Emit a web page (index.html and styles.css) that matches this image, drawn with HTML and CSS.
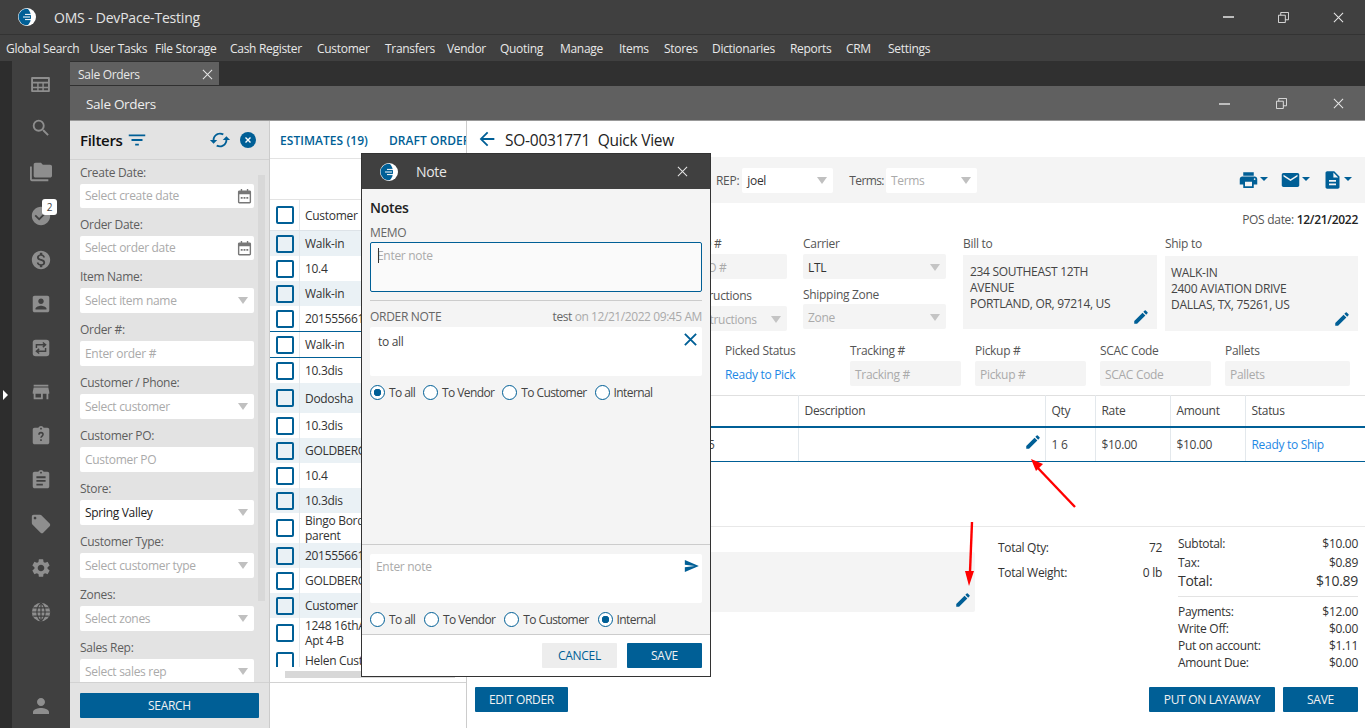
FILE: index.html
```html
<!DOCTYPE html>
<html lang="en">
<head>
<meta charset="utf-8">
<title>OMS - DevPace-Testing</title>
<link rel="stylesheet" href="styles.css">
</head>
<body>
<svg class="sprite" width="0" height="0">
  <defs>
    <symbol id="logo" viewBox="0 0 18 18"><circle cx="9" cy="9" r="9" fill="#fff"/><path d="M10 .9A8.2 8.2 0 1 0 10 17.1C12 15 13 12 13 9S12 3 10 .9z" fill="#005f96"/><path d="M7 6.400h7M5 9h7M7 11.600h7" stroke="#fff" stroke-width="1"/></symbol>
    <symbol id="pencil" viewBox="0 0 24 24"><path d="M3 17.250V21h3.750L17.810 9.940l-3.750-3.750L3 17.250zM20.710 7.040a.996.996 0 0 0 0-1.410l-2.340-2.340a.996.996 0 0 0-1.410 0l-1.830 1.830 3.750 3.750 1.830-1.830z"/></symbol>
    <symbol id="cal" viewBox="0 0 16 16"><path d="M1 3.500C1 2.700 1.700 2 2.500 2H4V.5h1.500V2h5V.5H12V2h1.500c.8 0 1.500.7 1.500 1.500v11c0 .8-.7 1.500-1.500 1.500h-11C1.700 16 1 15.300 1 14.500zM2.500 6v8.500h11V6zM4 9h2v2H4zm3 0h2v2H7zm3 0h2v2h-2z"/></symbol>
    <symbol id="clip" viewBox="0 0 24 24"><path d="M19 3h-4.180C14.400 1.840 13.300 1 12 1c-1.300 0-2.400.84-2.820 2H5c-1.100 0-2 .9-2 2v14c0 1.100.9 2 2 2h14c1.100 0 2-.9 2-2V5c0-1.100-.9-2-2-2zm-7 0c.55 0 1 .45 1 1s-.45 1-1 1-1-.45-1-1 .45-1 1-1z"/></symbol>
    <symbol id="max" viewBox="0 0 12 12"><path d="M.5 3.500h7.500v8H.5zM3 3.500V.5h8.500v8H8" fill="none" stroke="#e6e6e6"/></symbol>
    <symbol id="closex" viewBox="0 0 12 12"><path d="M1 1l10 10M11 1L1 11" fill="none" stroke="#e6e6e6" stroke-width="1.100"/></symbol>
  </defs>
</svg>

<div class="app">
  <header class="titlebar">
    <svg class="logo"><use href="#logo"/></svg>
    <span class="apptitle">OMS - DevPace-Testing</span>
    <div class="winbtns winbtns-top">
      <span class="minbar"></span>
      <svg class="winicon"><use href="#max"/></svg>
      <svg class="winicon"><use href="#closex"/></svg>
    </div>
  </header>
  <nav class="menubar">
    <span>Global Search</span><span>User Tasks</span><span>File Storage</span><span>Cash Register</span><span>Customer</span><span>Transfers</span><span>Vendor</span><span>Quoting</span><span>Manage</span><span>Items</span><span>Stores</span><span>Dictionaries</span><span>Reports</span><span>CRM</span><span>Settings</span>
  </nav>

  <div class="workspace">
    <div class="strip"><span class="expand"></span></div>
    <aside class="sidebar">
      <div class="side-item"><svg viewBox="0 0 20 16" class="si si-table"><path d="M1 0h18a1 1 0 0 1 1 1v14a1 1 0 0 1-1 1H1a1 1 0 0 1-1-1V1a1 1 0 0 1 1-1zm1 2v3h16V2zm0 5v3.500h4.500V7zm6 0v3.500h4V7zm5.500 0v3.500H18V7zM2 12v2h4.500v-2zm6 0v2h4v-2zm5.500 0v2H18v-2z" fill-rule="evenodd"/></svg></div>
      <div class="side-item"><svg viewBox="0 0 24 24" class="si"><path d="M15.500 14h-.79l-.28-.27A6.471 6.471 0 0 0 16 9.500 6.500 6.500 0 1 0 9.500 16c1.610 0 3.090-.59 4.230-1.570l.27.28v.79l5 4.990L20.490 19l-4.990-5zm-6 0C7.010 14 5 11.990 5 9.500S7.010 5 9.500 5 14 7.010 14 9.500 11.990 14 9.500 14z"/></svg></div>
      <div class="side-item"><svg viewBox="0 0 24 24" class="si"><path d="M2 6H0v5h.01L0 20c0 1.100.9 2 2 2h18v-2H2V6zm20-2h-8l-2-2H6c-1.100 0-1.990.9-1.990 2L4 16c0 1.100.9 2 2 2h16c1.100 0 2-.9 2-2V6c0-1.100-.9-2-2-2z"/></svg></div>
      <div class="side-item"><svg viewBox="0 0 24 24" class="si"><path d="M12 2C6.480 2 2 6.480 2 12s4.480 10 10 10 10-4.480 10-10S17.520 2 12 2zm-2 15l-5-5 1.410-1.410L10 14.170l7.590-7.590L19 8l-9 9z"/></svg><span class="badge">2</span></div>
      <div class="side-item"><svg viewBox="0 0 24 24" class="si"><path d="M12 2C6.480 2 2 6.480 2 12s4.480 10 10 10 10-4.480 10-10S17.520 2 12 2zm1.410 16.090V20h-2.670v-1.930c-1.710-.36-3.160-1.460-3.270-3.400h1.960c.1 1.050.82 1.870 2.650 1.870 1.960 0 2.400-.98 2.400-1.590 0-.83-.44-1.610-2.670-2.140-2.480-.6-4.180-1.620-4.180-3.670 0-1.720 1.390-2.840 3.110-3.210V4h2.670v1.950c1.860.45 2.790 1.860 2.850 3.390H14.300c-.05-1.110-.64-1.870-2.220-1.870-1.500 0-2.400.68-2.400 1.640 0 .84.65 1.390 2.670 1.910s4.180 1.390 4.180 3.910c-.01 1.830-1.380 2.830-3.120 3.160z"/></svg></div>
      <div class="side-item"><svg viewBox="0 0 24 24" class="si"><path d="M3 5v14c0 1.100.89 2 2 2h14c1.100 0 2-.9 2-2V5c0-1.100-.9-2-2-2H5c-1.110 0-2 .9-2 2zm12 4c0 1.660-1.340 3-3 3s-3-1.340-3-3 1.340-3 3-3 3 1.340 3 3zm-9 8c0-2 4-3.100 6-3.100s6 1.100 6 3.100v1H6v-1z"/></svg></div>
      <div class="side-item"><svg viewBox="0 0 24 24" class="si"><rect x="3" y="3" width="18" height="18" rx="3"/><path d="M7 12V8.500h9M14 6l3 2.500-3 2.500M17 12v3.500H8M10 13l-3 2.500 3 2.500" fill="none" stroke="#404040" stroke-width="1.600"/></svg></div>
      <div class="side-item"><svg viewBox="0 0 24 24" class="si"><path d="M20 4H4v2h16V4zm1 10v-2l-1-5H4l-1 5v2h1v6h10v-6h4v6h2v-6h1zm-9 4H6v-4h6v4z"/></svg></div>
      <div class="side-item"><svg viewBox="0 0 24 24" class="si"><use href="#clip"/><path d="M9.800 10.500c0-1.300 1-2.200 2.200-2.200s2.200.9 2.200 2.100c0 1.700-2.200 1.700-2.200 3.600M12 15.500v2" fill="none" stroke="#404040" stroke-width="1.700"/></svg></div>
      <div class="side-item"><svg viewBox="0 0 24 24" class="si"><use href="#clip"/><path d="M7 8h10v2H7zm0 4h10v2H7zm0 4h7v2H7z" fill="#404040"/></svg></div>
      <div class="side-item"><svg viewBox="0 0 24 24" class="si"><path d="M21.410 11.580l-9-9C12.050 2.220 11.550 2 11 2H4c-1.100 0-2 .9-2 2v7c0 .55.22 1.050.59 1.420l9 9c.36.36.86.58 1.410.58.55 0 1.050-.22 1.410-.59l7-7c.37-.36.59-.86.59-1.410 0-.55-.23-1.060-.59-1.420zM5.500 7C4.670 7 4 6.330 4 5.500S4.670 4 5.500 4 7 4.670 7 5.500 6.330 7 5.500 7z"/></svg></div>
      <div class="side-item"><svg viewBox="0 0 24 24" class="si"><path d="M19.140 12.940c.04-.3.06-.61.06-.94 0-.32-.02-.64-.07-.94l2.030-1.580a.49.49 0 0 0 .12-.61l-1.920-3.320a.488.488 0 0 0-.59-.22l-2.390.96c-.5-.38-1.030-.7-1.620-.94l-.36-2.540a.484.484 0 0 0-.48-.41h-3.840c-.24 0-.43.17-.47.41l-.36 2.540c-.59.24-1.130.57-1.620.94l-2.390-.96c-.22-.08-.47 0-.59.22L2.740 8.870c-.12.21-.08.47.12.61l2.030 1.580c-.05.3-.09.63-.09.94s.02.64.07.94l-2.030 1.580a.49.49 0 0 0-.12.61l1.920 3.320c.12.22.37.29.59.22l2.390-.96c.5.38 1.030.7 1.620.94l.36 2.540c.05.24.24.41.48.41h3.840c.24 0 .44-.17.47-.41l.36-2.540c.59-.24 1.130-.56 1.620-.94l2.390.96c.22.08.47 0 .59-.22l1.920-3.320c.12-.22.07-.47-.12-.61l-2.010-1.580zM12 15.600c-1.980 0-3.600-1.620-3.600-3.600s1.620-3.600 3.600-3.600 3.600 1.620 3.600 3.600-1.620 3.600-3.600 3.600z"/></svg></div>
      <div class="side-item"><svg viewBox="0 0 24 24" class="si"><circle cx="12" cy="12" r="10"/><path d="M2 12h20M3.500 7.500h17M3.500 16.500h17M12 2c-6 5-6 15 0 20M12 2c6 5 6 15 0 20M12 2v20" fill="none" stroke="#404040" stroke-width="1.300"/></svg></div>
      <div class="side-item side-user"><svg viewBox="0 0 24 24" class="si si-user"><path d="M12 12c2.210 0 4-1.790 4-4s-1.790-4-4-4-4 1.790-4 4 1.790 4 4 4zm0 2c-2.670 0-8 1.340-8 4v2h16v-2c0-2.660-5.330-4-8-4z"/></svg></div>
    </aside>

    <main class="content">
      <div class="tabstrip">
        <div class="tab"><span>Sale Orders</span><svg class="tabclose"><use href="#closex"/></svg></div>
      </div>
      <div class="winhead">
        <span>Sale Orders</span>
        <div class="winbtns winbtns-inner">
          <span class="minbar"></span>
          <svg class="winicon"><use href="#max"/></svg>
          <svg class="winicon"><use href="#closex"/></svg>
        </div>
      </div>

      <div class="panes">
        <section class="filters">
          <div class="filters-head">
            <strong>Filters</strong>
            <svg viewBox="0 0 24 24" class="bi filt"><path d="M10 18h4v-2h-4v2zM3 6v2h18V6H3zm3 7h12v-2H6v2z"/></svg>
            <svg viewBox="0 0 24 24" class="bi sync"><path d="M12 4V1L8 5l4 4V6c3.310 0 6 2.690 6 6 0 1.010-.25 1.970-.7 2.800l1.460 1.460A7.930 7.930 0 0 0 20 12c0-4.420-3.580-8-8-8zm0 14c-3.310 0-6-2.690-6-6 0-1.010.25-1.970.7-2.800L5.240 7.740A7.930 7.930 0 0 0 4 12c0 4.420 3.580 8 8 8v3l4-4-4-4v3z"/></svg>
            <svg viewBox="0 0 16 16" class="clearall"><circle cx="8" cy="8" r="8" fill="#005f96"/><path d="M5.500 5.500l5 5M10.500 5.500l-5 5" stroke="#fff" stroke-width="1.400"/></svg>
          </div>
          <div class="filters-body">
            <div class="fields">
              <div class="field"><label>Create Date:</label><div class="ctl ctl-date ph"><span>Select create date</span><svg class="cal"><use href="#cal"/></svg></div></div>
              <div class="field"><label>Order Date:</label><div class="ctl ctl-date ph"><span>Select order date</span><svg class="cal"><use href="#cal"/></svg></div></div>
              <div class="field"><label>Item Name:</label><div class="ctl ph"><span>Select item name</span><i class="caret"></i></div></div>
              <div class="field"><label>Order #:</label><div class="ctl ph"><span>Enter order #</span></div></div>
              <div class="field"><label>Customer / Phone:</label><div class="ctl ph"><span>Select customer</span><i class="caret"></i></div></div>
              <div class="field"><label>Customer PO:</label><div class="ctl ph"><span>Customer PO</span></div></div>
              <div class="field"><label>Store:</label><div class="ctl"><span>Spring Valley</span><i class="caret"></i></div></div>
              <div class="field"><label>Customer Type:</label><div class="ctl ph"><span>Select customer type</span><i class="caret"></i></div></div>
              <div class="field"><label>Zones:</label><div class="ctl ph"><span>Select zones</span><i class="caret"></i></div></div>
              <div class="field"><label>Sales Rep:</label><div class="ctl ph"><span>Select sales rep</span><i class="caret"></i></div></div>
            </div>
            <div class="vscroll"><div class="vthumb"></div></div>
          </div>
          <div class="filters-foot"><button class="btn btn-search">SEARCH</button></div>
        </section>

        <section class="list">
          <div class="list-tabs"><span>ESTIMATES (19)</span><span>DRAFT ORDERS</span></div>
          <div class="list-gap"></div>
          <div class="rows">
            <div class="row row-head"><span class="cb"></span><span class="cell">Customer</span></div>
            <div class="row tint"><span class="cb"></span><span class="cell">Walk-in</span></div>
            <div class="row"><span class="cb"></span><span class="cell">10.4</span></div>
            <div class="row tint"><span class="cb"></span><span class="cell">Walk-in</span></div>
            <div class="row"><span class="cb"></span><span class="cell">2015556619</span></div>
            <div class="row row-sel"><span class="cb"></span><span class="cell">Walk-in</span></div>
            <div class="row"><span class="cb"></span><span class="cell">10.3dis</span></div>
            <div class="row tint row-tall"><span class="cb"></span><span class="cell">Dodosha</span></div>
            <div class="row"><span class="cb"></span><span class="cell">10.3dis</span></div>
            <div class="row tint"><span class="cb"></span><span class="cell">GOLDBERG</span></div>
            <div class="row"><span class="cb"></span><span class="cell">10.4</span></div>
            <div class="row tint"><span class="cb"></span><span class="cell">10.3dis</span></div>
            <div class="row row-tall"><span class="cb"></span><span class="cell"><span>Bingo Bord<br>parent</span></span></div>
            <div class="row tint"><span class="cb"></span><span class="cell">2015556619</span></div>
            <div class="row"><span class="cb"></span><span class="cell">GOLDBERG</span></div>
            <div class="row tint"><span class="cb"></span><span class="cell">Customer</span></div>
            <div class="row row-tall"><span class="cb"></span><span class="cell"><span>1248 16thAve<br>Apt 4-B</span></span></div>
            <div class="row"><span class="cb"></span><span class="cell">Helen Customer</span></div>
          </div>
          <div class="hscroll"><div class="hthumb"></div></div>
          <div class="list-foot"></div>
        </section>

        <section class="quick">
          <div class="quick-title">
            <svg viewBox="0 0 24 24" class="back"><path d="M20 11H7.830l5.590-5.590L12 4l-8 8 8 8 1.410-1.410L7.830 13H20v-2z"/></svg>
            <span>SO-0031771&nbsp; Quick View</span>
          </div>
          <div class="toolbar">
            <span class="tlabel">REP:</span>
            <div class="tctl tctl-rep"><span>joel</span><i class="caret"></i></div>
            <span class="tlabel tlabel-terms">Terms:</span>
            <div class="tctl ph"><span>Terms</span><i class="caret"></i></div>
            <div class="tools">
              <svg viewBox="0 0 24 24" class="tool"><path d="M19 8H5c-1.660 0-3 1.340-3 3v6h4v4h12v-4h4v-6c0-1.660-1.340-3-3-3zm-3 11H8v-5h8v5zm3-7c-.55 0-1-.45-1-1s.45-1 1-1 1 .45 1 1-.45 1-1 1zm-1-9H6v4h12V3z"/></svg><i class="tcaret"></i>
              <svg viewBox="0 0 24 24" class="tool tool-gap"><path d="M20 4H4c-1.100 0-1.990.9-1.990 2L2 18c0 1.100.9 2 2 2h16c1.100 0 2-.9 2-2V6c0-1.100-.9-2-2-2zm0 4l-8 5-8-5V6l8 5 8-5v2z"/></svg><i class="tcaret"></i>
              <svg viewBox="0 0 24 24" class="tool tool-gap"><path d="M14 2H6c-1.100 0-1.990.9-1.990 2L4 20c0 1.100.89 2 1.990 2H18c1.100 0 2-.9 2-2V8l-6-6zm2 16H8v-2h8v2zm0-4H8v-2h8v2zm-3-5V3.500L18.500 9H13z"/></svg><i class="tcaret"></i>
            </div>
          </div>
          <div class="posdate"><span>POS date:</span> <b>12/21/2022</b></div>
          <div class="form">
            <div class="fcol fcol-a">
              <label>Customer PO #</label>
              <div class="fctl ph"><span>Customer PO #</span></div>
              <label class="lab2">Shipping Instructions</label>
              <div class="fctl ph fctl-a2"><span>Shipping Instructions</span><i class="caret"></i></div>
            </div>
            <div class="fcol fcol-b">
              <label>Carrier</label>
              <div class="fctl"><span>LTL</span><i class="caret"></i></div>
              <label class="lab3">Shipping Zone</label>
              <div class="fctl ph fctl-b2"><span>Zone</span><i class="caret"></i></div>
            </div>
            <div class="fcol fcol-c">
              <label>Bill to</label>
              <div class="addr addr-bill">234 SOUTHEAST 12TH<br>AVENUE<br>PORTLAND, OR, 97214, US<svg class="pen addr-pen"><use href="#pencil"/></svg></div>
            </div>
            <div class="fcol fcol-d">
              <label>Ship to</label>
              <div class="addr addr-ship">WALK-IN<br>2400 AVIATION DRIVE<br>DALLAS, TX, 75261, US<svg class="pen addr-pen"><use href="#pencil"/></svg></div>
            </div>
          </div>
          <div class="form3">
            <div class="f3 f3-status"><label>Picked Status</label><a>Ready to Pick</a></div>
            <div class="f3"><label>Tracking #</label><div class="fctl ph"><span>Tracking #</span></div></div>
            <div class="f3"><label>Pickup #</label><div class="fctl ph"><span>Pickup #</span></div></div>
            <div class="f3"><label>SCAC Code</label><div class="fctl ph"><span>SCAC Code</span></div></div>
            <div class="f3 f3-wide"><label>Pallets</label><div class="fctl ph"><span>Pallets</span></div></div>
          </div>
          <table class="items">
            <colgroup><col class="c1"><col class="c2"><col class="c3"><col class="c4"><col class="c4"><col></colgroup>
            <thead><tr><th></th><th>Description</th><th>Qty</th><th>Rate</th><th>Amount</th><th>Status</th></tr></thead>
            <tbody><tr><td class="td-sku">5</td><td class="td-desc"><svg class="pen"><use href="#pencil"/></svg></td><td>1 6</td><td>$10.00</td><td>$10.00</td><td><a>Ready to Ship</a></td></tr></tbody>
          </table>
          <div class="quick-foot">
            <div class="notebox"><svg class="pen note-pen"><use href="#pencil"/></svg></div>
            <div class="totals">
              <div class="kv"><span>Total Qty:</span><span>72</span></div>
              <div class="kv"><span>Total Weight:</span><span>0 lb</span></div>
            </div>
            <div class="summary">
              <div class="kv kv-sub"><span>Subtotal:</span><span>$10.00</span></div>
              <div class="kv kv-tax"><span>Tax:</span><span>$0.89</span></div>
              <div class="kv kv-total"><span>Total:</span><span>$10.89</span></div>
              <div class="kv"><span>Payments:</span><span>$12.00</span></div>
              <div class="kv"><span>Write Off:</span><span>$0.00</span></div>
              <div class="kv"><span>Put on account:</span><span>$1.11</span></div>
              <div class="kv"><span>Amount Due:</span><span>$0.00</span></div>
            </div>
          </div>
          <div class="quick-actions">
            <button class="btn btn-edit">EDIT ORDER</button>
            <button class="btn btn-lay">PUT ON LAYAWAY</button>
            <button class="btn btn-qsave">SAVE</button>
          </div>
        </section>
      </div>
    </main>
  </div>

  <div class="modal">
    <div class="modal-head">
      <svg class="logo"><use href="#logo"/></svg>
      <span>Note</span>
      <svg class="modal-x"><use href="#closex"/></svg>
    </div>
    <div class="modal-body">
      <h3>Notes</h3>
      <div class="mlabel">MEMO</div>
      <div class="memo"><i class="cursor"></i><span>Enter note</span></div>
      <div class="mdivider"></div>
      <div class="notemeta"><span class="mlabel">ORDER NOTE</span><span class="when"><b>test</b> on 12/21/2022 09:45 AM</span></div>
      <div class="notecard"><span>to all</span><svg viewBox="0 0 16 16" class="notex"><path d="M2 2l12 12M14 2L2 14" stroke="#005f96" stroke-width="2" fill="none"/></svg></div>
      <div class="radios radios-a">
        <span class="radio on">To all</span><span class="radio">To Vendor</span><span class="radio">To Customer</span><span class="radio">Internal</span>
      </div>
      <div class="mspacer"></div>
      <div class="compose">
        <div class="notecard notecard-in"><span>Enter note</span><svg viewBox="0 0 24 24" class="send"><path d="M2.010 21L23 12 2.010 3 2 10l15 2-15 2z"/></svg></div>
        <div class="radios radios-b">
          <span class="radio">To all</span><span class="radio">To Vendor</span><span class="radio">To Customer</span><span class="radio on">Internal</span>
        </div>
      </div>
    </div>
    <div class="modal-foot">
      <button class="btn btn-cancel">CANCEL</button>
      <button class="btn btn-msave">SAVE</button>
    </div>
  </div>

  <svg class="arrows" viewBox="0 0 1365 728" width="1365" height="728">
    <path d="M1075 507L1036 466" stroke="#f00" stroke-width="2.400"/>
    <path d="M1031 459l12 5-7 7z" fill="#f00"/>
    <path d="M972 522L970 572" stroke="#f00" stroke-width="2.400"/>
    <path d="M969 586l-4-15h9z" fill="#f00"/>
  </svg>
</div>
</body>
</html>
```

FILE: styles.css
```css
* { box-sizing: border-box; }
html, body { margin: 0; height: 100%; overflow: hidden; }
body { font-family: "Open Sans", "Noto Sans", sans-serif; font-size: 12px; color: #333; letter-spacing: -.3px; }
.sprite { position: absolute; }
.app { position: relative; width: 1365px; height: 728px; display: flex; flex-direction: column; overflow: hidden; background: #fff; }
button { font-family: inherit; letter-spacing: inherit; border: 0; cursor: pointer; }

.titlebar { height: 35px; flex: none; background: #404040; border-bottom: 1px solid #333; display: flex; align-items: center; padding-left: 18px; color: #e4e4e4; }
.logo { width: 18px; height: 18px; flex: none; }
.apptitle { font-size: 14px; margin-left: 18px; letter-spacing: -.2px; }
.winbtns { margin-left: auto; display: flex; align-items: center; }
.winbtns-top { gap: 44px; padding-right: 21px; }
.winbtns-inner { gap: 46px; padding-right: 21px; }
.minbar { width: 11px; height: 2px; background: #bdbdbd; }
.winicon { width: 11px; height: 11px; }

.menubar { height: 26px; flex: none; background: #404040; display: grid; align-items: center; grid-template-columns: 84px 65px 75px 87px 68px 62px 53px 60px 59px 45px 48px 78px 56px 42px auto; padding-left: 6px; color: #e8e8e8; white-space: nowrap; }

.workspace { flex: 1; display: flex; min-height: 0; background: #303030; }
.strip { width: 12px; flex: none; background: #2d2d2d; display: flex; align-items: center; padding-left: 3px; }
.expand { width: 0; height: 0; border-left: 5px solid #fff; border-top: 5px solid transparent; border-bottom: 5px solid transparent; }
.sidebar { width: 58px; flex: none; background: #404040; display: flex; flex-direction: column; padding-top: 1px; }
.side-item { height: 44px; flex: none; position: relative; display: flex; align-items: center; justify-content: center; padding-right: 1px; }
.side-user { margin-top: auto; }
.si { width: 22px; height: 22px; fill: #8e8e8e; }
.si-table { width: 19px; height: 15px; }
.si-user { width: 24px; height: 24px; }
.badge { position: absolute; left: 30px; top: 5px; width: 15px; height: 16px; background: #fff; color: #444; border-radius: 3px; font-size: 10px; line-height: 16px; text-align: center; }

.content { flex: 1; display: flex; flex-direction: column; min-width: 0; }
.tabstrip { height: 25px; flex: none; padding-top: 1px; background: #303030; }
.tab { width: 149px; height: 23px; background: #606060; color: #e8e8e8; display: flex; align-items: center; padding: 1px 6px 0 8px; justify-content: space-between; }
.tabclose { width: 11px; height: 11px; }
.winhead { height: 35px; flex: none; background: #606060; color: #eee; font-size: 13.500px; display: flex; align-items: center; padding: 1px 0 0 16px; border-bottom: 1px solid #999; }

.panes { flex: 1; display: flex; min-height: 0; }
.filters { width: 200px; flex: none; background: #e3e3e3; border-right: 1px solid #ccc; display: flex; flex-direction: column; }
.filters-head { height: 39px; flex: none; border-bottom: 1px solid #d2d2d2; display: flex; align-items: center; padding: 0 13px 1px 10px; }
.filters-head strong { font-size: 15px; color: #111; font-weight: 600; }
.bi { fill: #005f96; }
.filt { width: 22px; height: 22px; margin-left: 3px; }
.sync { width: 22px; height: 22px; margin-left: auto; margin-right: -2px; transform: rotate(90deg); }
.clearall { width: 16px; height: 16px; margin-left: 11px; }
.filters-body { flex: 1; min-height: 0; display: flex; overflow: hidden; padding-left: 10px; }
.fields { width: 174px; flex: none; padding-top: 5px; }
.field { margin-bottom: 9px; }
.field label { display: block; height: 16px; line-height: 16px; margin-bottom: 3px; color: #5e5e5e; }
.ctl { height: 25px; background: #fff; border-radius: 2px; display: flex; align-items: center; justify-content: space-between; padding: 0 6px 1px 5px; color: #222; }
.ctl-date { height: 24px; padding-right: 2px; }
.ph { color: #aaa; }
.caret { width: 0; height: 0; border-left: 5px solid transparent; border-right: 5px solid transparent; border-top: 7px solid #c0c0c0; flex: none; }
.cal { width: 15px; height: 16px; fill: #777; }
.vscroll { width: 7px; margin-left: 4px; margin-top: 15px; flex: none; }
.vthumb { height: 426px; background: #d8d8d8; }
.filters-foot { height: 46px; flex: none; border-top: 1px solid #d2d2d2; padding: 10px 0 0 10px; }
.btn { background: #005f96; color: #f2f2f2; height: 25px; border-radius: 1px; font-size: 12px; text-align: center; padding: 0; }
.btn-search { width: 179px; }

.list { width: 197px; flex: none; display: flex; flex-direction: column; border-right: 1px solid #ccc; overflow: hidden; background: #fff; }
.list-tabs { height: 38px; flex: none; display: flex; gap: 21px; align-items: center; padding: 1px 0 0 10px; color: #005f96; font-weight: 600; letter-spacing: .05px; white-space: nowrap; border-bottom: 1px solid #e3e3e3; }
.list-gap { height: 41px; flex: none; border-bottom: 1px solid #e3e3e3; }
.rows { height: 467px; flex: none; overflow: hidden; }
.row { height: 25px; display: flex; align-items: center; white-space: nowrap; }
.row-head { height: 31px; border-bottom: 1px solid #dde3e8; }
.row-sel { height: 27px; border-top: 1px solid #005f96; border-bottom: 1px solid #005f96; }
.row-tall { height: 30px; }
.tint { background: #eaf1f5; }
.cb { width: 18px; height: 18px; margin: 0 5px 0 6px; border: 2px solid #005f96; border-radius: 2px; background: #fff; flex: none; }
.tint .cb { background: transparent; }
.cell { align-self: stretch; display: flex; align-items: center; border-left: 1px solid #e3e8ec; padding-left: 5px; color: #333; line-height: 15px; }
.hscroll { height: 14px; flex: none; padding: 4px 0 0 15px; }
.hthumb { height: 7px; width: 170px; background: #d8d8d8; }
.list-foot { flex: 1; border-top: 1px solid #d2d2d2; margin-top: 1px; }

.quick { flex: 1; min-width: 0; display: flex; flex-direction: column; background: #fff; }
.quick-title { height: 36px; flex: none; display: flex; align-items: center; padding: 1px 0 0 9px; font-size: 15.500px; font-weight: 500; letter-spacing: -.25px; color: #222; gap: 7px; }
.back { width: 22px; height: 22px; fill: #005f96; margin-top: -1px; }
.toolbar { height: 46px; flex: none; background: #f4f4f4; display: flex; align-items: center; padding: 0 7px 0 249px; }
.tlabel { color: #555; margin-right: 3px; }
.tlabel-terms { margin-left: 16px; margin-right: 2px; letter-spacing: -.6px; }
.tctl { width: 91px; height: 25px; background: #fff; border-radius: 2px; display: flex; align-items: center; justify-content: space-between; padding: 1px 6px 0 5px; }
.tools { margin-left: auto; display: flex; align-items: center; padding-right: 6px; }
.tool { width: 21px; height: 22px; fill: #005f96; }
.tool-gap { margin-left: 12px; }
.tcaret { width: 0; height: 0; border-left: 4px solid transparent; border-right: 4px solid transparent; border-top: 4px solid #005f96; margin-left: 1px; margin-top: -3px; }
.posdate { height: 32px; flex: none; padding: 9px 7px 0 0; text-align: right; color: #555; line-height: 16px; }
.posdate b { color: #222; font-weight: 600; }
.form { display: flex; height: 96px; flex: none; padding-left: 173px; }
.fcol { display: flex; flex-direction: column; }
.fcol label, .f3 label { height: 16px; line-height: 18px; margin-bottom: 3px; color: #555; white-space: nowrap; }
.fcol-a { width: 147px; overflow: hidden; }
.fcol-b { width: 143px; margin-left: 16px; }
.fcol-c { width: 194px; margin-left: 17px; }
.fcol-d { width: 193px; margin-left: 8px; }
.fctl { height: 25px; background: #f4f4f4; border-radius: 2px; display: flex; align-items: center; justify-content: space-between; padding: 1px 6px 0 5px; flex: none; white-space: nowrap; }
.fctl .caret { border-top-color: #c4c4c4; }
.lab2 { margin-top: 8px; }
.lab3 { margin-top: 7px; margin-bottom: 2px !important; }
.addr { position: relative; height: 74px; margin-top: 1px; background: #f4f4f4; padding: 9px 7px; color: #444; line-height: 16px; white-space: nowrap; }
.addr-ship { height: 75px; margin-top: 2px; padding-left: 6px; }
.pen { width: 18px; height: 18px; fill: #005f96; flex: none; }
.addr-pen { position: absolute; right: 7px; bottom: 3px; }
.form3 { display: flex; margin-top: 11px; height: 44px; flex: none; padding-left: 258px; }
.f3 { width: 111px; margin-left: 14px; display: flex; flex-direction: column; }
.f3-status { width: 111px; margin-left: 0; }
.f3-wide { width: 125px; }
.f3-status a { line-height: 27px; }
a { color: #1e88e5; }
.items { margin-top: 9px; width: 898px; flex: none; table-layout: fixed; border-collapse: collapse; border-top: 1px solid #e0e0e0; }
.c1 { width: 331px; } .c2 { width: 247px; } .c3 { width: 50px; } .c4 { width: 75px; }
.items th { height: 31px; font-weight: 400; text-align: left; padding: 0 0 1px 6px; color: #444; border-left: 1px solid #e3e8ec; border-bottom: 2px solid #005f96; }
.items th:first-child, .items td:first-child { border-left: 0; }
.items td { height: 35px; padding-left: 6px; border-left: 1px solid #e3e8ec; border-bottom: 1px solid #005f96; color: #444; }
.items td.td-sku { padding-left: 241px; }
.items td.td-desc { text-align: right; padding: 5px 3px 0 0; vertical-align: top; line-height: 0; }
.quick-foot { margin-top: 64px; height: 160px; flex: none; border-top: 1px solid #e8e8e8; display: flex; padding-left: 173px; }
.notebox { position: relative; width: 335px; height: 60px; margin-top: 25px; background: #f4f4f4; border-radius: 2px; }
.note-pen { position: absolute; right: 3px; bottom: 3px; }
.totals { width: 164px; margin-left: 23px; padding-top: 12px; }
.totals .kv { height: 25px; }
.kv { display: flex; justify-content: space-between; line-height: 17px; color: #333; }
.summary { width: 180px; margin-left: 16px; padding-top: 8px; }
.summary .kv { height: 17px; }
.summary .kv-sub { height: 19px; }
.summary .kv-tax { height: 18px; }
.summary .kv-total { height: 25px; font-size: 14px; font-weight: 500; padding-top: 0; border-bottom: 1px solid #e3e3e3; margin-bottom: 6px; }
.quick-actions { margin-top: auto; padding: 0 7px 16px 8px; display: flex; gap: 8px; flex: none; }
.btn-edit { width: 93px; margin-right: auto; }
.btn-lay { width: 126px; }
.btn-qsave { width: 75px; }

.modal { position: absolute; left: 361px; top: 153px; width: 350px; height: 524px; border: 1px solid #333; background: #fff; display: flex; flex-direction: column; z-index: 5; }
.modal-head { height: 35px; flex: none; background: #404040; color: #e8e8e8; font-size: 14px; display: flex; align-items: center; padding-left: 18px; gap: 18px; }
.modal-x { width: 11px; height: 11px; margin-left: auto; margin-right: 22px; }
.modal-body { flex: 1; min-height: 0; background: #f4f4f4; padding: 10px 8px 0; display: flex; flex-direction: column; border-bottom: 1px solid #ccc; }
.modal-body h3 { margin: 0; font-size: 14px; font-weight: 600; color: #222; line-height: 18px; }
.mlabel { color: #666; line-height: 16px; margin-top: 8px; }
.memo { position: relative; height: 50px; flex: none; margin-top: 1px; background: #fafafa; border: 1px solid #005f96; border-radius: 2px; padding: 4px 6px; color: #aaa; }
.cursor { position: absolute; left: 7px; top: 5px; width: 1px; height: 15px; background: #333; }
.mdivider { height: 1px; flex: none; background: #ccc; margin-top: 8px; }
.notemeta { display: flex; justify-content: space-between; align-items: baseline; height: 19px; margin-top: 7px; }
.notemeta .mlabel { margin-top: 0; }
.when { color: #aaa; letter-spacing: -.42px; }
.when b { color: #666; font-weight: 500; }
.notecard { position: relative; height: 49px; flex: none; background: #fff; border-radius: 2px; padding: 6px 8px; color: #444; }
.notex { position: absolute; right: 4px; top: 5px; width: 15px; height: 15px; }
.radios { display: flex; align-items: center; height: 17px; margin-top: 8px; color: #444; letter-spacing: -.6px; }
.radio { display: flex; align-items: center; }
.radio::before { content: ""; width: 13px; height: 13px; flex: none; border: 1.500px solid #005f96; border-radius: 50%; margin-right: 4px; background: #fff; }
.radio.on::before { background: radial-gradient(circle, #005f96 0 3.500px, #fff 4px); }
.radios-a .radio { margin-right: 8px; }
.radios-b .radio { margin-right: 9px; }
.mspacer { flex: 1; }
.compose { border-top: 1px solid #ccc; margin: 0 -8px; padding: 9px 8px 0; height: 90px; flex: none; }
.notecard-in { color: #aaa; padding: 4px 6px; }
.send { position: absolute; right: 2px; top: 4px; width: 17px; height: 16px; fill: #005f96; }
.modal-foot { height: 41px; flex: none; display: flex; justify-content: flex-end; gap: 10px; padding: 8px 8px 0 0; background: #fff; }
.btn-cancel { width: 75px; background: #ededed; color: #005f96; }
.btn-msave { width: 75px; }
.arrows { position: absolute; left: 0; top: 0; z-index: 6; pointer-events: none; }
```
